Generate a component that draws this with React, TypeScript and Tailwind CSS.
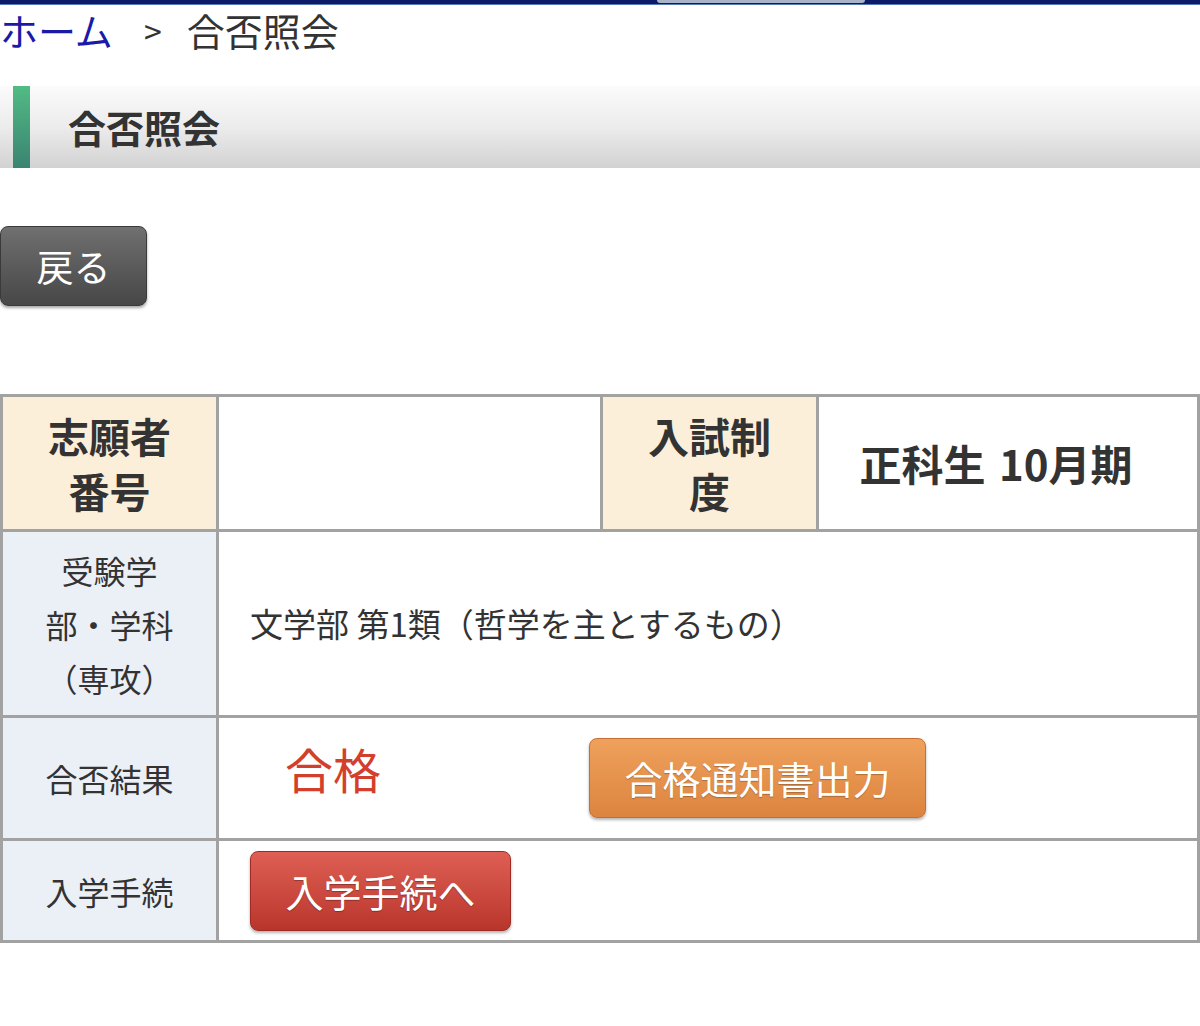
import React from "react";

/* ── Shared styles ──────────────────────────────────────────────────── */
const FONT = "font-['Noto_Sans_CJK_JP','Noto_Sans',sans-serif]";

const cellBorder = "border-r-[3px] border-b-[3px] border-[#a2a2a2]";
const thBeige = `${cellBorder} bg-[#fcefda] flex items-center justify-center text-center`;
const thBlue = `${cellBorder} bg-[#ebf0f7] flex items-center justify-center text-center`;

/* ── Header strip + breadcrumb ──────────────────────────────────────── */
function TopStrip() {
  return (
    <div className="h-[5px] w-full bg-[#0c1a68] border-b border-[#5a78b8] flex">
      <div className="ml-[657px] w-[208px] h-[3px] bg-[#a9b4c8] rounded-b-[3px]" />
    </div>
  );
}

function Breadcrumb() {
  return (
    <div className="flex items-center h-[58px] -mt-[4px] text-[38px] leading-none">
      <a className="text-[#1a1aa8]">ホーム</a>
      <span className="ml-[31px] text-[32px] text-[#333]">&gt;</span>
      <span className="ml-[25px] text-[#333]">合否照会</span>
    </div>
  );
}

function PageTitle() {
  return (
    <div className="mt-[27px] h-[82px] w-full flex bg-gradient-to-b from-[#fbfbfb] via-[#ececec] to-[#d2d2d2]">
      <div className="ml-[13px] w-[17px] h-full bg-gradient-to-b from-[#52bb84] to-[#3a8472]" />
      <h1 className="ml-[38px] self-center text-[38px] font-bold text-[#333] leading-none">合否照会</h1>
    </div>
  );
}

/* ── Buttons ────────────────────────────────────────────────────────── */
function BackButton() {
  return (
    <button className="h-[80px] w-[147px] rounded-[8px] border border-[#3a3a3a] bg-gradient-to-b from-[#707070] to-[#474747] text-white text-[37px] leading-none shadow-[0_2px_3px_rgba(0,0,0,0.35)]">
      戻る
    </button>
  );
}

function NoticeButton() {
  return (
    <button className="h-[80px] w-[337px] rounded-[8px] border border-[#c56f36] bg-gradient-to-b from-[#efa15c] to-[#dc843f] text-white text-[38px] leading-none shadow-[0_2px_3px_rgba(0,0,0,0.3)] [text-shadow:0_1px_1px_rgba(0,0,0,0.25)]">
      合格通知書出力
    </button>
  );
}

function EnrollButton() {
  return (
    <button className="h-[80px] w-[261px] rounded-[8px] border border-[#9e2c25] bg-gradient-to-b from-[#df5f55] to-[#b9352c] text-white text-[38px] leading-none shadow-[0_2px_3px_rgba(0,0,0,0.3)] [text-shadow:0_1px_1px_rgba(0,0,0,0.3)]">
      入学手続へ
    </button>
  );
}

/* ── Result table ───────────────────────────────────────────────────── */
function ResultTable() {
  return (
    <div className="mt-[88px] w-full border-l-[3px] border-t-[3px] border-[#a2a2a2] grid grid-cols-[216px_384px_216px_1fr] text-[#333]">
      {/* Row 1 */}
      <div className={`${thBeige} h-[135px] text-[41px] font-bold leading-[55px]`}>
        志願者<br />番号
      </div>
      <div className={`${cellBorder} bg-white`} />
      <div className={`${thBeige} h-[135px] text-[41px] font-bold leading-[55px]`}>
        入試制<br />度
      </div>
      <div className={`${cellBorder} bg-white flex items-center justify-center pr-[24px] text-[42px] font-bold leading-none [word-spacing:4px]`}>
        正科生 10月期
      </div>

      {/* Row 2 */}
      <div className={`${thBlue} h-[186px] text-[32px] leading-[54px]`}>
        受験学<br />部・学科<br />（専攻）
      </div>
      <div className={`${cellBorder} col-span-3 bg-white flex items-center pl-[31px] text-[33px] leading-none`}>
        文学部 第1類（哲学を主とするもの）
      </div>

      {/* Row 3 */}
      <div className={`${thBlue} h-[123px] text-[32px] leading-none`}>合否結果</div>
      <div className={`${cellBorder} col-span-3 bg-white flex items-center`}>
        <span className="ml-[66px] mb-[20px] text-[48px] leading-none text-[#d23f2d]">合格</span>
        <div className="ml-[208px]">
          <NoticeButton />
        </div>
      </div>

      {/* Row 4 */}
      <div className={`${thBlue} h-[102px] text-[32px] leading-none`}>入学手続</div>
      <div className={`${cellBorder} col-span-3 bg-white flex items-center pl-[31px]`}>
        <EnrollButton />
      </div>
    </div>
  );
}

/* ── Page ───────────────────────────────────────────────────────────── */
export default function App() {
  return (
    <div className={`${FONT} w-[1200px] h-[1026px] bg-white overflow-hidden`}>
      <TopStrip />
      <Breadcrumb />
      <PageTitle />
      <div className="mt-[58px]">
        <BackButton />
      </div>
      <ResultTable />
    </div>
  );
}
